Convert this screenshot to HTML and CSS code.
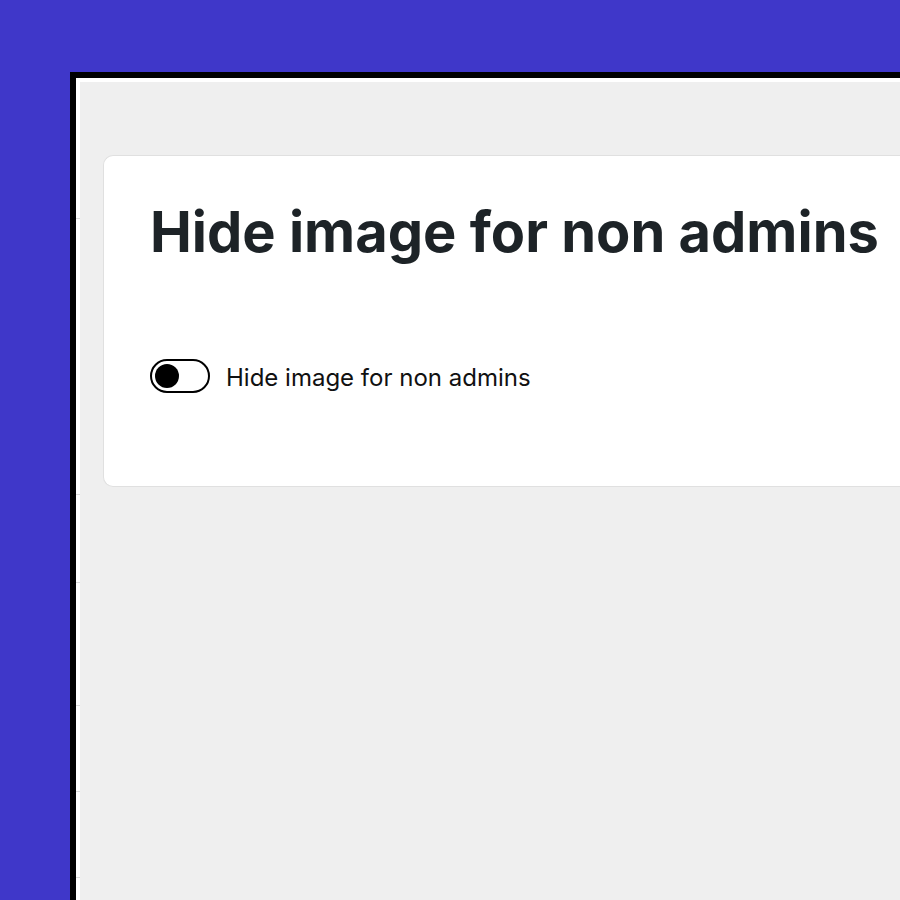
FILE: index.html
```html
<!DOCTYPE html>
<html lang="en">
<head>
<meta charset="UTF-8">
<meta name="viewport" content="width=device-width, initial-scale=1.0">
<title>Hide image for non admins</title>
<link rel="stylesheet" href="styles.css">
</head>
<body>

<div class="frame">
    <div class="edge">
        <span class="tick t1"></span>
        <span class="tick t2"></span>
        <span class="tick t3"></span>
        <span class="tick t4"></span>
        <span class="tick t5"></span>
        <span class="tick t6"></span>
    </div>
    <div class="main">
        <div class="card">
            <h1>Hide image for non admins</h1>
            <label class="toggle-row">
                <input type="checkbox" class="toggle">
                <span class="toggle-label">Hide image for non admins</span>
            </label>
        </div>
    </div>
</div>

</body>
</html>
```

FILE: styles.css
```css
body {
    margin: 0;
    padding: 0;
    background-color: #3f37c9;
    font-family: Inter, "Noto Sans", sans-serif;
    overflow: hidden;
}
.frame {
    display: flex;
    margin: 72px 0 0 70px;
    height: 828px;
    border-top: 6px solid #000;
    border-left: 6px solid #000;
    background-color: #fff;
    padding-top: 4px;
}
.edge {
    width: 4px;
    display: flex;
    flex-direction: column;
}
.tick {
    display: block;
    border-bottom: 1px solid #dcdcdc;
}
.t1 { height: 136px; }
.t2 { height: 275px; }
.t3 { height: 87px; }
.t4 { height: 122px; }
.t5 { height: 85px; }
.t6 { height: 85px; }
.main {
    flex: 1;
    background-color: #efefef;
    padding: 73px 0 0 23px;
}
.card {
    background-color: #fff;
    border: 1px solid #e0e0e0;
    border-right: none;
    border-radius: 10px 0 0 10px;
    padding: 42px 0 93px 46px;
}
.card h1 {
    margin: 0 0 93px;
    font-size: 56px;
    font-weight: 700;
    color: #1d2327;
    white-space: nowrap;
}
.toggle-row {
    display: flex;
    align-items: center;
    gap: 16px;
    font-size: 24px;
    color: #111;
}
.toggle-label {
    padding-top: 3px;
}
.toggle {
    appearance: none;
    margin: 0;
    width: 60px;
    height: 34px;
    border: 2px solid #000;
    border-radius: 17px;
    background-color: #fff;
    position: relative;
}
.toggle::before {
    content: "";
    position: absolute;
    left: 3px;
    top: 3px;
    width: 24px;
    height: 24px;
    border-radius: 50%;
    background-color: #000;
}
```
